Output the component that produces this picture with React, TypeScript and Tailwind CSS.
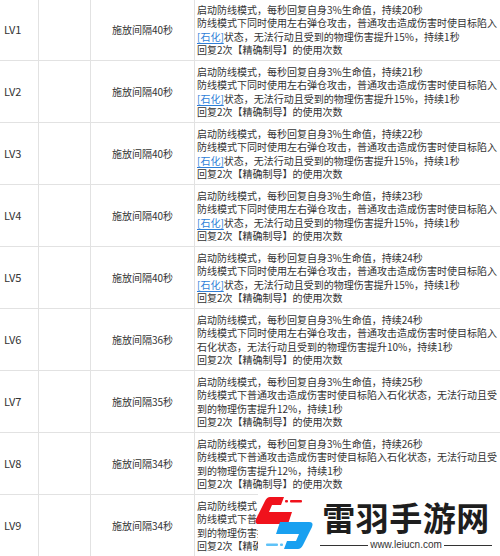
import React from 'react'

type Row = {
  lv: string
  cd: number
  dur: number
  kind: 'a' | 'b' | 'c'
}

const rows: Row[] = [
  { lv: 'LV1', cd: 40, dur: 20, kind: 'a' },
  { lv: 'LV2', cd: 40, dur: 21, kind: 'a' },
  { lv: 'LV3', cd: 40, dur: 22, kind: 'a' },
  { lv: 'LV4', cd: 40, dur: 23, kind: 'a' },
  { lv: 'LV5', cd: 40, dur: 24, kind: 'a' },
  { lv: 'LV6', cd: 36, dur: 24, kind: 'b' },
  { lv: 'LV7', cd: 35, dur: 25, kind: 'c' },
  { lv: 'LV8', cd: 34, dur: 26, kind: 'c' },
  { lv: 'LV9', cd: 34, dur: 27, kind: 'c' },
]

const Desc: React.FC<{ row: Row }> = ({ row }) => {
  const first = `启动防线模式，每秒回复自身3%生命值，持续${row.dur}秒`
  const last = '回复2次【精确制导】的使用次数'

  let second = '防线模式下同时使用左右弹仓攻击，普通攻击造成伤害时使目标陷入'
  let third: React.ReactNode = (
    <>
      <span className="text-[#2f7fd8] underline underline-offset-2">[石化]</span>
      状态，无法行动且受到的物理伤害提升15%，持续1秒
    </>
  )
  if (row.kind === 'b') {
    third = '石化状态，无法行动且受到的物理伤害提升10%，持续1秒'
  }
  if (row.kind === 'c') {
    second = '防线模式下普通攻击造成伤害时使目标陷入石化状态，无法行动且受'
    third = '到的物理伤害提升12%，持续1秒'
  }

  return (
    <div className="flex flex-col whitespace-nowrap leading-[13.5px]">
      <div>{first}</div>
      <div>{second}</div>
      <div>{third}</div>
      <div>{last}</div>
    </div>
  )
}

const Logo: React.FC = () => (
  <svg
    width="62"
    height="60"
    viewBox="253 494 62 60"
    className="absolute left-[253px] top-[494px]"
  >
    {/* red half */}
    <path
      d="M270 497 L284 497 L281 505 L272 505 L269 512 L292 512 L288 524 L259 524 Q254 524 256 519 L265 501 Q267 497 270 497 Z"
      fill="#f0121c"
    />
    <rect x="285" y="500" width="3" height="2.5" rx="1" fill="#f0121c" />
    <rect x="290" y="500" width="12" height="2.5" rx="1" fill="#f0121c" />
    {/* blue half, same shape turned round */}
    <g transform="rotate(180 284 523)">
      <path
        d="M270 497 L284 497 L281 505 L272 505 L269 512 L292 512 L288 524 L259 524 Q254 524 256 519 L265 501 Q267 497 270 497 Z"
        fill="#19a0f0"
      />
      <rect x="285" y="500" width="3" height="2.5" rx="1" fill="#5fc2f7" />
      <rect x="290" y="500" width="12" height="2.5" rx="1" fill="#5fc2f7" />
    </g>
  </svg>
)

export default function App() {
  return (
    <div className="relative w-[500px] h-[556px] overflow-hidden bg-white text-[#333] font-['Noto_Sans_CJK_SC','Noto_Sans',sans-serif]">
      <div className="-mt-px">
        {rows.map((row, i) => (
          <div
            key={row.lv}
            className="grid grid-cols-[39px_52px_104px_1fr] h-[62px] border-b border-[#e2e2e2]"
          >
            <div className="flex items-center pl-[4px] text-[11px] border-r border-[#e2e2e2]">
              {row.lv}
            </div>
            <div className="border-r border-[#e2e2e2]" />
            <div className="flex items-center justify-center text-[10px] border-r border-[#e2e2e2]">
              施放间隔{row.cd}秒
            </div>
            <div className="flex items-center pl-[2px] text-[10px]">
              {/* last row sits under the watermark, so it is cut short */}
              {i === rows.length - 1 ? (
                <div className="w-[64px] overflow-hidden">
                  <Desc row={row} />
                </div>
              ) : (
                <Desc row={row} />
              )}
            </div>
          </div>
        ))}
      </div>

      {/* watermark */}
      <div className="absolute left-[258px] top-[493px] w-[242px] h-[63px] bg-white" />
      <Logo />
      <div className="absolute left-[320px] top-[499px] w-[172px] flex flex-col items-center">
        <div className="text-[33px] leading-[36px] font-bold tracking-[0.5px] text-[#1e1e1e] font-['Noto_Sans_CJK_SC',sans-serif]">
          雷羽手游网
        </div>
        <div className="flex items-center w-full gap-[2px] mt-[4px]">
          <div className="flex-1 h-px bg-[#333]" />
          <span className="text-[10px] leading-[12px] text-[#333] font-['Liberation_Sans',Arial,sans-serif]">
            www.leiucn.com
          </span>
          <div className="flex-1 h-px bg-[#333]" />
        </div>
      </div>
    </div>
  )
}
